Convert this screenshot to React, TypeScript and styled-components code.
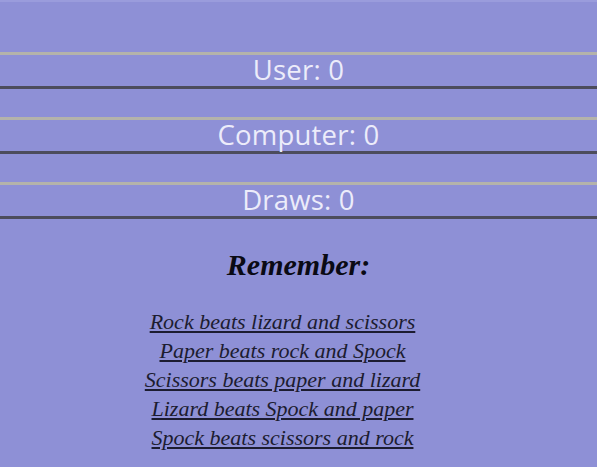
import styled, { createGlobalStyle } from "styled-components";

const GlobalStyle = createGlobalStyle`
    html, body {
        margin: 0;
        padding: 0;
        background: #8e90d6;
    }
    body {
        min-height: 467px;
    }
`;

const Page = styled.div`
    display: flex;
    flex-direction: column;
    align-items: stretch;
    padding-top: 50px;
    border-top: 2px solid #9a9cdc;
`;

const ScoreList = styled.div`
    display: flex;
    flex-direction: column;
    gap: 28px;
`;

const ScoreBox = styled.div`
    box-sizing: content-box;
    height: 29px;
    padding-bottom: 2px;
    border-top: 3px solid #b4b3ab;
    border-bottom: 3px solid #4c4c5c;
    display: flex;
    align-items: center;
    justify-content: center;
    font-family: "Open Sans", sans-serif;
    font-size: 27.5px;
    font-weight: 400;
    color: #ececfa;
    letter-spacing: 0.2px;
`;

const Rules = styled.div`
    display: flex;
    flex-direction: column;
    align-items: center;
    margin-top: 29px;
`;

const Title = styled.h2`
    margin: 0 0 25px;
    font-family: "Liberation Serif", serif;
    font-style: italic;
    font-weight: bold;
    font-size: 30px;
    line-height: 34px;
    color: #0a0a14;
`;

const RuleList = styled.div`
    display: flex;
    flex-direction: column;
    align-items: center;
    padding-right: 32px;
`;

const RuleLink = styled.a`
    font-family: "Liberation Serif", serif;
    font-style: italic;
    font-size: 22px;
    line-height: 29px;
    color: #1c1c30;
    text-decoration: underline;
    cursor: pointer;
`;

const scores = [
    { label: "User", value: 0 },
    { label: "Computer", value: 0 },
    { label: "Draws", value: 0 },
];

const rules = [
    "Rock beats lizard and scissors",
    "Paper beats rock and Spock",
    "Scissors beats paper and lizard",
    "Lizard beats Spock and paper",
    "Spock beats scissors and rock",
];

export default function App(): JSX.Element {
    return (
        <>
            <GlobalStyle />
            <Page>
                <ScoreList>
                    {scores.map((s) => (
                        <ScoreBox key={s.label}>
                            {s.label}: {s.value}
                        </ScoreBox>
                    ))}
                </ScoreList>
                <Rules>
                    <Title>Remember:</Title>
                    <RuleList>
                        {rules.map((r) => (
                            <RuleLink key={r}>{r}</RuleLink>
                        ))}
                    </RuleList>
                </Rules>
            </Page>
        </>
    );
}
